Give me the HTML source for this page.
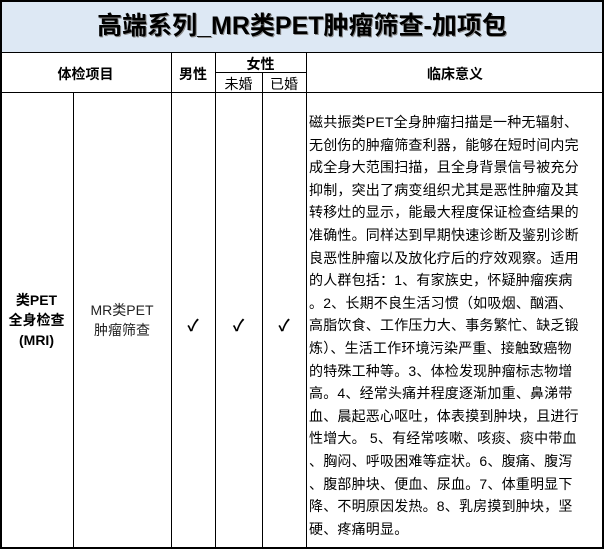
<!DOCTYPE html>
<html><head><meta charset="utf-8"><style>
*{margin:0;padding:0;box-sizing:border-box}
body{width:604px;height:549px;background:#fff;font-family:"Liberation Sans","Noto Sans CJK SC",sans-serif;color:#000;position:relative;overflow:hidden}
.a{position:absolute}
.h{background:#000}
.title{left:0;top:0;width:604px;height:52px;background:#dde8f4;font-size:25px;font-weight:bold;text-align:center;line-height:52px;text-shadow:1px 1px 0 #888}
.c{text-align:center;font-size:13px}
.b{font-weight:bold}
.txt{left:309px;top:111px;font-size:14px;line-height:22.6px;white-space:nowrap;letter-spacing:0.2px}
</style></head><body>
<div class="a title">高端系列_MR类PET肿瘤筛查-加项包</div>
<div class="a h" style="left:0;top:0;width:604px;height:2px"></div>
<div class="a h" style="left:0;top:547px;width:604px;height:2px"></div>
<div class="a h" style="left:0;top:0;width:2px;height:549px"></div>
<div class="a h" style="left:602px;top:0;width:2px;height:549px"></div>
<div class="a h" style="left:0;top:52px;width:604px;height:1px"></div>
<div class="a h" style="left:0;top:92px;width:604px;height:1px"></div>
<div class="a h" style="left:215px;top:72px;width:91px;height:1px"></div>
<div class="a h" style="left:73px;top:92px;width:1px;height:456px"></div>
<div class="a h" style="left:171px;top:52px;width:1px;height:496px"></div>
<div class="a h" style="left:215px;top:52px;width:1px;height:496px"></div>
<div class="a h" style="left:262px;top:72px;width:1px;height:476px"></div>
<div class="a h" style="left:306px;top:52px;width:1px;height:496px"></div>
<div class="a c b" style="left:0;width:171px;top:64px;font-size:14px">体检项目</div>
<div class="a c b" style="left:171px;width:44px;top:64px;font-size:14px">男性</div>
<div class="a c b" style="left:215px;width:91px;top:54px;font-size:14px">女性</div>
<div class="a c" style="left:215px;width:47px;top:74px;font-size:14px">未婚</div>
<div class="a c" style="left:262px;width:44px;top:74px;font-size:14px">已婚</div>
<div class="a c b" style="left:306px;width:298px;top:64px;font-size:14px">临床意义</div>
<div class="a c b" style="left:0;width:73px;top:290px;line-height:20px;font-size:14px">类PET<br>全身检查<br>(MRI)</div>
<div class="a c" style="left:73px;width:98px;top:300px;line-height:20px;font-size:14px;color:#222">MR类PET<br>肿瘤筛查</div>
<div class="a c b" style="left:171px;width:44px;top:312px;font-size:16px">✓</div>
<div class="a c b" style="left:215px;width:47px;top:312px;font-size:16px">✓</div>
<div class="a c b" style="left:262px;width:44px;top:312px;font-size:16px">✓</div>
<div class="a txt">磁共振类PET全身肿瘤扫描是一种无辐射、<br>无创伤的肿瘤筛查利器，能够在短时间内完<br>成全身大范围扫描，且全身背景信号被充分<br>抑制，突出了病变组织尤其是恶性肿瘤及其<br>转移灶的显示，能最大程度保证检查结果的<br>准确性。同样达到早期快速诊断及鉴别诊断<br>良恶性肿瘤以及放化疗后的疗效观察。适用<br>的人群包括：1、有家族史，怀疑肿瘤疾病<br>。2、长期不良生活习惯（如吸烟、酗酒、<br>高脂饮食、工作压力大、事务繁忙、缺乏锻<br>炼）、生活工作环境污染严重、接触致癌物<br>的特殊工种等。3、体检发现肿瘤标志物增<br>高。4、经常头痛并程度逐渐加重、鼻涕带<br>血、晨起恶心呕吐，体表摸到肿块，且进行<br>性增大。 5、有经常咳嗽、咳痰、痰中带血<br>、胸闷、呼吸困难等症状。6、腹痛、腹泻<br>、腹部肿块、便血、尿血。7、体重明显下<br>降、不明原因发热。8、乳房摸到肿块，坚<br>硬、疼痛明显。</div>
</body></html>
